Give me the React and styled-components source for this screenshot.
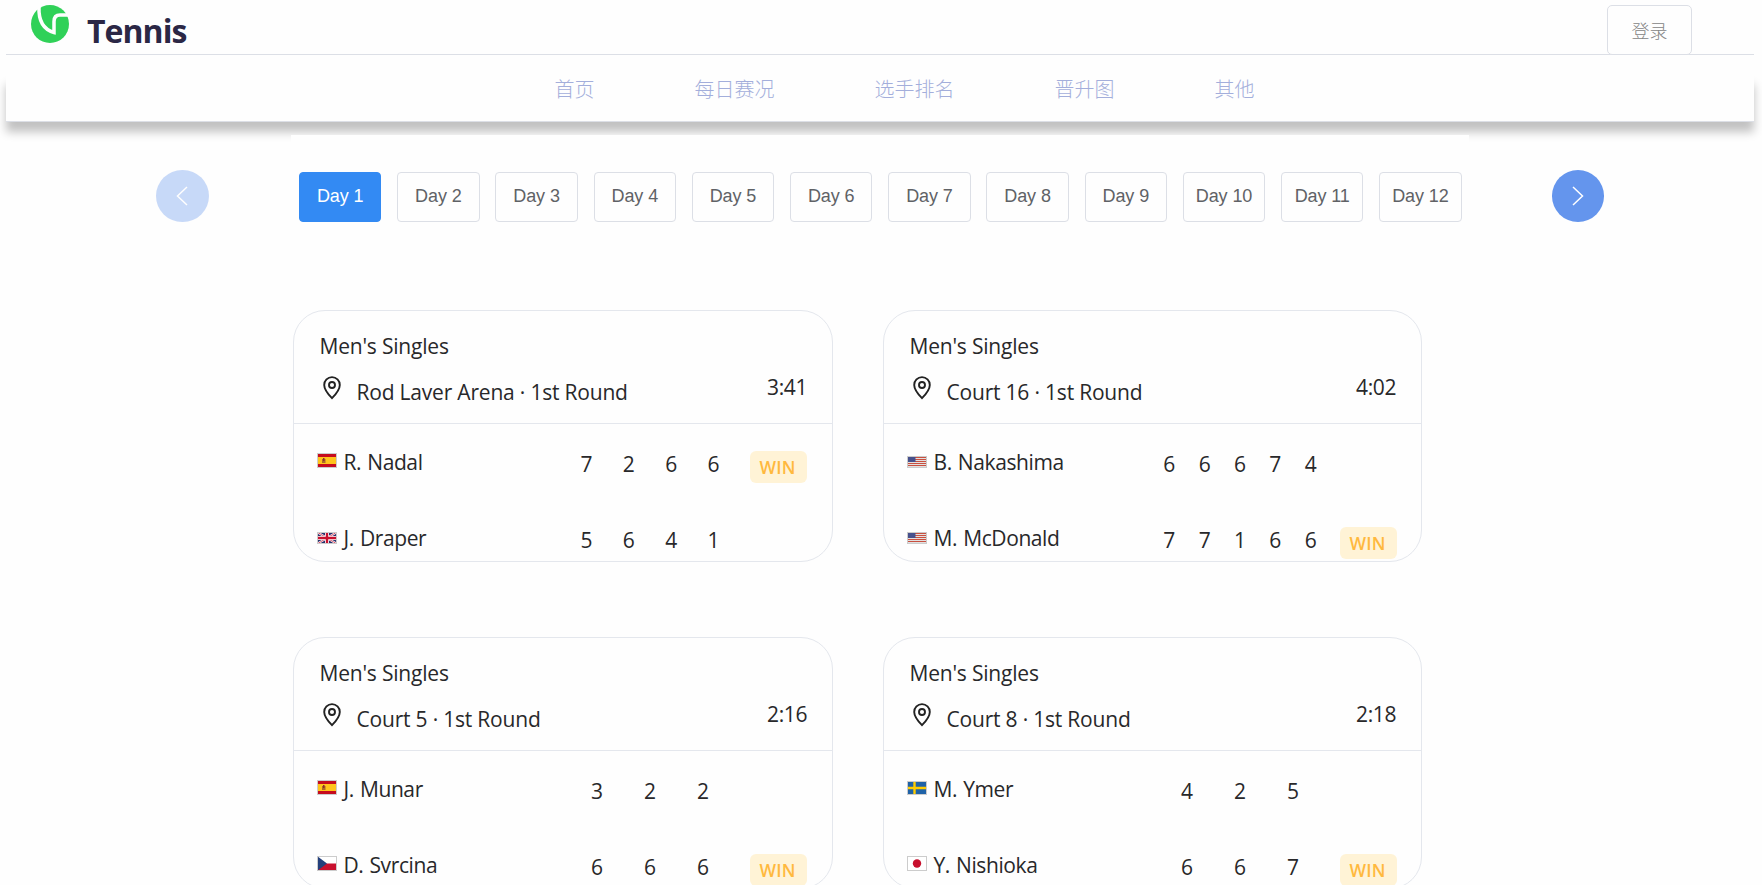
import React from "react";
import styled, { createGlobalStyle } from "styled-components";

const GlobalStyle = createGlobalStyle`
  * { box-sizing: border-box; }
  html, body { margin: 0; background: #fefefe; }
  body {
    height: 885px;
    overflow: hidden;
    color: #28282a;
    font-family: "Open Sans", "Noto Sans", "Noto Sans CJK SC", sans-serif;
  }
  button { font-family: inherit; cursor: pointer; }
`;

const Header = styled.header`
  display: flex;
  align-items: flex-start;
  justify-content: space-between;
  height: 55px;
  margin: 0 8px 0 6px;
  padding: 5px 62px 0 25px;
  border-bottom: 1px solid #dcdfe6;
`;

const Brand = styled.div`
  display: flex;
  align-items: flex-start;
  gap: 18px;
`;

const BrandName = styled.span`
  margin-top: 4px;
  font-size: 32px;
  line-height: 44px;
  font-weight: 700;
  letter-spacing: -0.95px;
  color: #2b2745;
`;

const LoginButton = styled.button`
  width: 85px;
  height: 50px;
  padding: 0 0 1px;
  border: 1px solid #dcdfe6;
  border-radius: 5px;
  background: #fefefe;
  color: #858585;
  font-family: "Noto Sans CJK SC", sans-serif;
  font-weight: 300;
  font-size: 18px;
`;

const NavWrap = styled.div`
  padding: 20px 8px 0 6px;
`;

const Nav = styled.nav`
  display: flex;
  justify-content: center;
  height: 47px;
  padding-left: 49px;
  border-bottom: 1px solid #dcdfe6;
  background: #fefefe;
  box-shadow: 0 10px 9px rgba(0, 0, 0, 0.24);
`;

const NavItem = styled.a`
  padding: 0 50px;
  font-family: "Noto Sans CJK SC", sans-serif;
  font-weight: 300;
  font-size: 20px;
  line-height: 28px;
  color: #a3aedb;
`;

const Pager = styled.div`
  position: relative;
  display: flex;
  align-items: flex-start;
  justify-content: space-between;
  margin-top: 13px;
  padding: 0 158px 0 156px;
`;

const Arrow = styled.button`
  display: flex;
  align-items: center;
  justify-content: center;
  width: 52.5px;
  height: 52px;
  margin-top: 35px;
  padding: 0 0 1px;
  border: 0;
  border-radius: 50%;
  background: #6495ed;
  opacity: ${(p) => (p.disabled ? 0.35 : 1)};
`;

const Days = styled.div`
  display: grid;
  grid-template-columns: repeat(12, 1fr);
  column-gap: 15.8px;
  width: 1178px;
  padding: 37px 7.4px 0 8px;
  background: #fefefe;
`;

const Day = styled.button`
  height: 50px;
  padding: 0 0 2px;
  border: 1px solid ${(p) => (p.$active ? "#338af3" : "#dcdfe6")};
  border-radius: 4px;
  background: ${(p) => (p.$active ? "#338af3" : "#fefefe")};
  color: ${(p) => (p.$active ? "#fff" : "#606266")};
  font-family: "Liberation Sans", Arial, sans-serif;
  font-size: 18px;
  letter-spacing: -0.1px;
  white-space: nowrap;
`;

const Matches = styled.main`
  display: grid;
  grid-template-columns: 540px 539px;
  column-gap: 50px;
  row-gap: 75px;
  margin: 88px 0 0 293px;
`;

const Card = styled.article`
  height: 252px;
  border: 1px solid #e4e7ed;
  border-radius: 32px;
  font-size: 21px;
  overflow: hidden;
`;

const CardHead = styled.div`
  height: 113px;
  padding: 21px 25px 0 25.5px;
  border-bottom: 1px solid #e4e7ed;
`;

const Category = styled.div`
  line-height: 29px;
  letter-spacing: -0.2px;
`;

const Venue = styled.div`
  display: flex;
  align-items: flex-start;
  margin-top: 13px;
`;

const Court = styled.span`
  flex: 1;
  margin: 4px 0 0 15px;
  line-height: 29px;
  letter-spacing: -0.2px;
`;

const Duration = styled.span`
  margin-top: -1px;
  line-height: 29px;
  letter-spacing: -0.4px;
`;

const Player = styled.div`
  display: grid;
  grid-template-columns: 233px 200px auto;
  align-items: start;
  height: 76px;
  padding: 24px 25px 0 23px;
`;

const Name = styled.div`
  display: flex;
  align-items: baseline;
  gap: 6.5px;
  line-height: 29px;
  letter-spacing: -0.4px;
  word-spacing: 1px;
  white-space: nowrap;
`;

const Scores = styled.div`
  display: flex;
  justify-content: space-evenly;
  margin-top: 2px;
  line-height: 29px;
`;

const Win = styled.span`
  justify-self: end;
  width: 57px;
  height: 32px;
  margin-top: 3px;
  padding-right: 2px;
  border-radius: 6px;
  background: #fff3d6;
  color: #ffb93e;
  font-size: 17.5px;
  font-weight: 600;
  line-height: 32px;
  letter-spacing: 0.2px;
  text-align: center;
`;

const Logo = () => (
  <svg width="38" height="38" viewBox="0 0 38 38" fill="none">
    <circle cx="19" cy="19" r="19" fill="#30d158" />
    <path d="M8 2C7.500 14 11 24 23 27.500V16.500C23 12 25 10 29 10H38" stroke="#fefefe" strokeWidth="3.500" />
  </svg>
);

const Chevron = ({ left }) => (
  <svg width="18" height="20" viewBox="0 0 18 20" fill="none" stroke="#fff" strokeWidth="1.5">
    <path d={left ? "M14 1L4.5 10L14 19" : "M4 1L13.5 10L4 19"} />
  </svg>
);

const Pin = () => (
  <svg width="22" height="26" viewBox="0 -1 22 26" fill="none" stroke="#222" strokeWidth="1.9">
    <path d="M12 23.200C8 19 4.200 14.600 4.200 9.900a7.800 7.800 0 0 1 15.600 0c0 4.700-3.800 9.100-7.800 13.300Z" />
    <circle cx="12" cy="10" r="3" />
  </svg>
);

const flags = {
  es: [15, <>
    <path fill="#c60b1e" d="M0 0h20v15H0z" />
    <path fill="#ffc41c" d="M0 4h20v7H0z" />
    <path fill="#ad6a25" d="M5 6h3.500v4H5z" />
    <path fill="#8f2d2b" d="M6 5h1.500v3H6z" />
  </>],
  gb: [12, <>
    <path fill="#29336f" d="M0 0h20v12H0z" />
    <path stroke="#fff" strokeWidth="2" d="M0 0L20 12M20 0L0 12" />
    <path stroke="#c8102e" strokeWidth="0.7" d="M0 0L20 12M20 0L0 12" />
    <path stroke="#fff" strokeWidth="4" d="M10 0v12M0 6h20" />
    <path stroke="#c8102e" strokeWidth="2.400" d="M10 0v12M0 6h20" />
  </>],
  us: [12, <>
    <path fill="#e2dfdf" d="M0 0h20v12H0z" />
    <path stroke="#c9503f" strokeWidth="1" d="M0 1.500h20M0 3.500h20M0 5.500h20M0 7.500h20M0 9.500h20M0 11.500h20" />
    <path fill="#46508c" d="M0 0h8.500v6H0z" />
  </>],
  cz: [15, <>
    <path fill="#fff" d="M0 0h20v7.500H0z" />
    <path fill="#c8102e" d="M0 7.500h20V15H0z" />
    <path fill="#24407c" d="M0 0l10 7.500L0 15z" />
  </>],
  se: [14, <>
    <path fill="#1f62a7" d="M0 0h20v14H0z" />
    <path stroke="#fc0" strokeWidth="2.400" d="M7.500 0v14M0 7h20" />
  </>],
  jp: [15, <>
    <path fill="#fff" d="M0 0h20v15H0z" />
    <circle fill="#c8102e" cx="10" cy="7.500" r="4.200" />
  </>],
};

const FlagArt = styled.svg`
  transform: translateY(-2px);
`;

const Flag = ({ code }) => {
  const [h, art] = flags[code];
  return (
    <FlagArt width="20" height={h} viewBox={`0 0 20 ${h}`}>
      {art}
      <rect x="0.5" y="0.5" width="19" height={h - 1} fill="none" stroke="#ccc" />
    </FlagArt>
  );
};

const matches = [
  { court: "Rod Laver Arena", time: "3:41", players: [["es", "R. Nadal", "7266", true], ["gb", "J. Draper", "5641"]] },
  { court: "Court 16", time: "4:02", players: [["us", "B. Nakashima", "66674"], ["us", "M. McDonald", "77166", true]] },
  { court: "Court 5", time: "2:16", players: [["es", "J. Munar", "322"], ["cz", "D. Svrcina", "666", true]] },
  { court: "Court 8", time: "2:18", players: [["se", "M. Ymer", "425"], ["jp", "Y. Nishioka", "667", true]] },
];

export default function App() {
  return (
    <>
      <GlobalStyle />
      <Header>
        <Brand>
          <Logo />
          <BrandName>Tennis</BrandName>
        </Brand>
        <LoginButton>登录</LoginButton>
      </Header>
      <NavWrap>
        <Nav>
          {["首页", "每日赛况", "选手排名", "晋升图", "其他"].map((t) => (
            <NavItem key={t}>{t}</NavItem>
          ))}
        </Nav>
      </NavWrap>
      <Pager>
        <Arrow disabled><Chevron left /></Arrow>
        <Days>
          {Array.from({ length: 12 }, (_, i) => (
            <Day key={i} $active={i === 0}>Day {i + 1}</Day>
          ))}
        </Days>
        <Arrow><Chevron /></Arrow>
      </Pager>
      <Matches>
        {matches.map((m) => (
          <Card key={m.court}>
            <CardHead>
              <Category>Men's Singles</Category>
              <Venue>
                <Pin />
                <Court>{m.court} · 1st Round</Court>
                <Duration>{m.time}</Duration>
              </Venue>
            </CardHead>
            {m.players.map(([code, name, sets, won]) => (
              <Player key={name}>
                <Name><Flag code={code} />{name}</Name>
                <Scores>
                  {sets.split("").map((s, i) => <span key={i}>{s}</span>)}
                </Scores>
                {won && <Win>WIN</Win>}
              </Player>
            ))}
          </Card>
        ))}
      </Matches>
    </>
  );
}
